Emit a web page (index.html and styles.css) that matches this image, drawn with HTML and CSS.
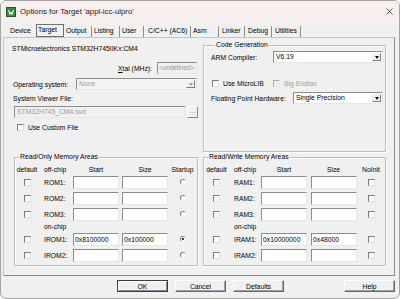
FILE: index.html
```html
<!DOCTYPE html>
<html>
<head>
<meta charset="utf-8">
<link rel="stylesheet" href="styles.css">
</head>
<body>
<div class="window">
  <div class="titlebar">
    <svg class="app-icon" viewBox="0 0 10 10"><rect x="0.5" y="0.5" width="9" height="9" fill="#2f8f3c" stroke="#1d5a26"/><polyline points="2.5,3 4,7.5 5,5 6,7.5 7.5,3" fill="none" stroke="#fff" stroke-width="1"/></svg>
    <span class="title">Options for Target 'appl-icc-ulpro'</span>
    <svg class="close" viewBox="0 0 8 8"><path d="M0.5 0.5 L7.5 7.5 M7.5 0.5 L0.5 7.5" stroke="#333" stroke-width="0.9"/></svg>
  </div>
  <div class="tabs">
    <div class="tab tab-first">Device</div>
    <div class="tab tab-active">Target</div>
    <div class="tab">Output</div>
    <div class="tab">Listing</div>
    <div class="tab tab-user">User</div>
    <div class="tab tab-cc">C/C++ (AC6)</div>
    <div class="tab">Asm</div>
    <div class="tab tab-linker">Linker</div>
    <div class="tab tab-debug">Debug</div>
    <div class="tab tab-util">Utilities</div>
  </div>
  <div class="panel">
    <div class="top">
      <div class="target-col">
        <div class="device-name">STMicroelectronics STM32H745IIKx:CM4</div>
        <div class="xtal-row">
          <span class="xtal-label"><u>X</u>tal (MHz):</span>
          <div class="field disabled xtal">&lt;undefined&gt;</div>
        </div>
        <div class="os-row">
          <span>Operating system:</span>
          <div class="combo disabled os"><span class="combo-text">None</span><span class="combo-btn"><span class="tri"></span></span></div>
        </div>
        <div class="svf-label">System Viewer File:</div>
        <div class="svf-row">
          <div class="field disabled svf">STM32H745_CM4.svd</div>
          <div class="browse">...</div>
        </div>
        <div class="check-row"><span class="checkbox"></span><span>Use Custom File</span></div>
      </div>
      <fieldset class="group codegen">
        <legend>Code Generation</legend>
        <div class="cg-row cg-compiler">
          <span>ARM Compiler:</span>
          <div class="combo arm"><span class="combo-text">V6.19</span><span class="combo-btn"><span class="tri"></span></span></div>
        </div>
        <div class="cg-row cg-opts">
          <div class="opt opt-microlib"><span class="checkbox"></span><span>Use MicroLIB</span></div>
          <div class="opt opt-disabled"><span class="checkbox"></span><span>Big Endian</span></div>
        </div>
        <div class="cg-row cg-fpu">
          <span>Floating Point Hardware:</span>
          <div class="combo fpu"><span class="combo-text">Single Precision</span><span class="combo-btn"><span class="tri"></span></span></div>
        </div>
      </fieldset>
    </div>
    <div class="bottom">
      <fieldset class="group mem ro">
        <legend>Read/Only Memory Areas</legend>
        <div class="mem-grid ro-grid">
          <span class="hd">default</span><span class="hd lbl">off-chip</span><span class="hd">Start</span><span class="hd hd-size">Size</span><span class="hd">Startup</span>
          <span class="cell"><span class="checkbox"></span></span><span class="lbl">ROM1:</span><span class="field mf"></span><span class="field mf mf2"></span><span class="cell"><span class="radio"></span></span>
          <span class="cell"><span class="checkbox"></span></span><span class="lbl">ROM2:</span><span class="field mf"></span><span class="field mf mf2"></span><span class="cell"><span class="radio"></span></span>
          <span class="cell"><span class="checkbox"></span></span><span class="lbl">ROM3:</span><span class="field mf"></span><span class="field mf mf2"></span><span class="cell"><span class="radio"></span></span>
          <span class="onchip">on-chip</span>
          <span class="cell"><span class="checkbox"></span></span><span class="lbl">IROM1:</span><span class="field mf">0x8100000</span><span class="field mf mf2">0x100000</span><span class="cell"><span class="radio checked"></span></span>
          <span class="cell"><span class="checkbox"></span></span><span class="lbl">IROM2:</span><span class="field mf"></span><span class="field mf mf2"></span><span class="cell"><span class="radio"></span></span>
        </div>
      </fieldset>
      <fieldset class="group mem rw">
        <legend>Read/Write Memory Areas</legend>
        <div class="mem-grid rw-grid">
          <span class="hd">default</span><span class="hd lbl">off-chip</span><span class="hd">Start</span><span class="hd hd-size">Size</span><span class="hd">NoInit</span>
          <span class="cell"><span class="checkbox"></span></span><span class="lbl">RAM1:</span><span class="field mf"></span><span class="field mf mf2"></span><span class="cell"><span class="checkbox"></span></span>
          <span class="cell"><span class="checkbox"></span></span><span class="lbl">RAM2:</span><span class="field mf"></span><span class="field mf mf2"></span><span class="cell"><span class="checkbox"></span></span>
          <span class="cell"><span class="checkbox"></span></span><span class="lbl">RAM3:</span><span class="field mf"></span><span class="field mf mf2"></span><span class="cell"><span class="checkbox"></span></span>
          <span class="onchip">on-chip</span>
          <span class="cell"><span class="checkbox"></span></span><span class="lbl">IRAM1:</span><span class="field mf">0x10000000</span><span class="field mf mf2">0x48000</span><span class="cell"><span class="checkbox"></span></span>
          <span class="cell"><span class="checkbox"></span></span><span class="lbl">IRAM2:</span><span class="field mf"></span><span class="field mf mf2"></span><span class="cell"><span class="checkbox"></span></span>
        </div>
      </fieldset>
    </div>
  </div>
  <div class="buttons">
    <div class="btn btn-default">OK</div>
    <div class="btn">Cancel</div>
    <div class="btn">Defaults</div>
    <div class="btn btn-help">Help</div>
  </div>
</div>
</body>
</html>
```
FILE: styles.css
```css
* { box-sizing: border-box; margin: 0; padding: 0; }
body {
  margin: 0;
  font-family: "Liberation Sans", Arial, sans-serif;
  font-size: 6.8px;
  color: #000;
  background: #fff;
}
.window {
  width: 400px;
  height: 299px;
  border: 1px solid #a3a3a3;
  border-radius: 6px;
  background: #f0f0f0;
  overflow: hidden;
  display: flex;
  flex-direction: column;
}
.titlebar {
  height: 21px;
  flex: none;
  background: #f8eeee;
  display: flex;
  align-items: center;
  padding: 0 5px;
}
.app-icon { width: 10px; height: 10px; margin-right: 4px; flex: none; }
.title { font-size: 7.8px; color: #1a1a1a; white-space: nowrap; }
.close { width: 7px; height: 7px; margin-left: auto; margin-right: 1px; }

.tabs {
  display: flex;
  align-items: flex-end;
  height: 15px;
  flex: none;
  padding-left: 7px;
}
.tab {
  width: 28px;
  height: 11px;
  line-height: 10px;
  padding-left: 2px;
  border-right: 1px solid #8c8c8c;
  white-space: nowrap;
}
.tab-first { border-right-color: transparent; }
.tab-active {
  height: 13px;
  border: 1px solid #6f6f6f;
  line-height: 10px;
  padding-left: 1px;
}
.tab-user { width: 24px; }
.tab-cc { width: 47px; padding-left: 4px; }
.tab-linker { width: 26px; padding-left: 3px; }
.tab-debug { width: 27px; padding-left: 3px; }
.tab-util { width: 29px; padding-left: 3px; }

.panel {
  flex: none;
  height: 239px;
  margin: 0 4px 0 2px;
  border: 1px solid;
  border-color: #c4c4c4 #8a8a8a #8a8a8a #c4c4c4;
  display: flex;
  flex-direction: column;
}
.top { display: flex; height: 114px; flex: none; }
.target-col {
  width: 186px;
  margin-left: 8px;
  display: flex;
  flex-direction: column;
}
.device-name { margin-top: 6px; line-height: 9px; white-space: nowrap; }
.xtal-row {
  margin-top: 9px;
  display: flex;
  justify-content: flex-end;
  align-items: center;
  height: 12px;
  padding-right: 1px;
}
.xtal-label { margin-right: 5px; }
.field {
  background: #fff;
  border: 1px solid;
  border-color: #8c8c8c #e6e6e6 #e6e6e6 #8c8c8c;
  height: 12px;
  line-height: 10px;
  padding-left: 2px;
  white-space: nowrap;
  overflow: hidden;
}
.field.disabled { background: #f0f0f0; color: #9a9a9a; }
.xtal { width: 40px; padding-left: 1px; letter-spacing: -0.25px; }
.os-row {
  margin-top: 4px;
  display: flex;
  align-items: center;
  height: 12px;
  padding-left: 1px;
  padding-right: 1px;
}
.combo {
  display: flex;
  height: 12px;
  background: #fff;
  border: 1px solid;
  border-color: #8c8c8c #e6e6e6 #e6e6e6 #8c8c8c;
  padding: 1px;
}
.combo-text { flex: 1; line-height: 8px; padding-left: 1px; white-space: nowrap; }
.combo-btn {
  width: 9px;
  flex: none;
  border: 1px solid;
  border-color: #f4f4f4 #7a7a7a #7a7a7a #f4f4f4;
  background: #f0f0f0;
  display: flex;
  align-items: center;
  justify-content: center;
}
.tri {
  width: 0;
  height: 0;
  border-left: 2.5px solid transparent;
  border-right: 2.5px solid transparent;
  border-top: 3px solid #000;
}
.combo.disabled { background: #f4f4f4; color: #9a9a9a; }
.combo.disabled .tri { border-top-color: #a0a0a0; }
.os { width: 121px; margin-left: auto; }
.svf-label { margin-top: 5px; line-height: 8px; padding-left: 1px; }
.svf-row { margin-top: 3px; display: flex; height: 12px; padding-left: 2px; }
.svf { width: 172px; }
.browse {
  width: 11px;
  margin-left: 1px;
  border: 1px solid;
  border-color: #fff #8a8a8a #8a8a8a #fff;
  color: #9a9a9a;
  text-align: center;
  line-height: 8px;
}
.check-row {
  margin-top: 5px;
  display: flex;
  align-items: center;
  padding-left: 5px;
  height: 8px;
}
.checkbox {
  width: 7px;
  height: 7px;
  flex: none;
  background: #fff;
  border: 1px solid;
  border-color: #7a7a7a #dcdcdc #dcdcdc #7a7a7a;
  display: inline-block;
}
.check-row .checkbox, .opt .checkbox { margin-right: 4px; }
.radio {
  width: 6px;
  height: 6px;
  border-radius: 50%;
  background: #fff;
  border: 1px solid;
  border-color: #808080 #f6f6f6 #f6f6f6 #808080;
  display: flex;
  align-items: center;
  justify-content: center;
}
.radio.checked::after {
  content: "";
  width: 2px;
  height: 2px;
  border-radius: 50%;
  background: #000;
}

.group {
  border: 1px solid #bdbdbd;
  box-shadow: inset 1px 1px 0 #fff, 1px 1px 0 #fff;
  min-width: 0;
}
.group legend {
  line-height: 8px;
  padding: 0 1px;
  margin-left: 4px;
  white-space: nowrap;
}
.codegen {
  width: 183px;
  height: 111px;
  margin-left: 5px;
  margin-top: 3px;
  padding-left: 7px;
}
.cg-row { display: flex; align-items: center; }
.cg-compiler { margin-top: 2px; height: 12px; }
.arm { width: 110px; margin-left: auto; margin-right: 2px; }
.cg-opts { margin-top: 16px; height: 9px; padding-left: 1px; }
.opt { display: flex; align-items: center; }
.opt-microlib { width: 61px; }
.opt-disabled { color: #a0a0a0; }
.opt-disabled .checkbox { background: #f0f0f0; border-color: #b0b0b0 #e6e6e6 #e6e6e6 #b0b0b0; }
.cg-fpu { margin-top: 4px; height: 12px; }
.fpu { width: 90px; margin-left: auto; margin-right: 2px; }

.bottom { display: flex; margin-top: 1px; }
.mem { height: 113px; }
.ro { width: 184px; margin-left: 10px; }
.rw { width: 183px; margin-left: 5px; }
.mem-grid {
  display: grid;
  grid-template-rows: 9px 16px 16px 16px 9px 16px 16px;
  margin-top: 4px;
  align-items: center;
}
.ro-grid { grid-template-columns: 24px 34px 46px 49px 29px; }
.rw-grid { grid-template-columns: 25px 32px 46px 50px 28px; }
.hd { text-align: center; line-height: 9px; white-space: nowrap; }
.hd.lbl { text-align: left; }
.lbl { padding-left: 5px; white-space: nowrap; }
.cell { display: flex; justify-content: center; align-items: center; }
.mf { height: 13px; line-height: 11px; padding-left: 1px; }
.mf2 { margin-left: 3px; }
.rw-grid .mf2 { margin-left: 4px; }
.hd-size { padding-left: 3px; }
.onchip { grid-column: 2 / span 4; padding-left: 5px; line-height: 9px; }

.buttons {
  display: flex;
  margin-top: 4px;
  padding: 0 4px 0 116px;
  gap: 7px;
  height: 12px;
  flex: none;
}
.btn {
  width: 51px;
  height: 12px;
  display: flex;
  align-items: center;
  justify-content: center;
  border: 1px solid;
  border-color: #fff #6a6a6a #6a6a6a #fff;
  box-shadow: inset -1px -1px 0 #a0a0a0;
  background: #f0f0f0;
}
.btn-default {
  border-color: #3c3c3c;
  box-shadow: inset 1px 1px 0 #fff, inset -1px -1px 0 #8a8a8a;
}
.btn-help { margin-left: auto; }
```
